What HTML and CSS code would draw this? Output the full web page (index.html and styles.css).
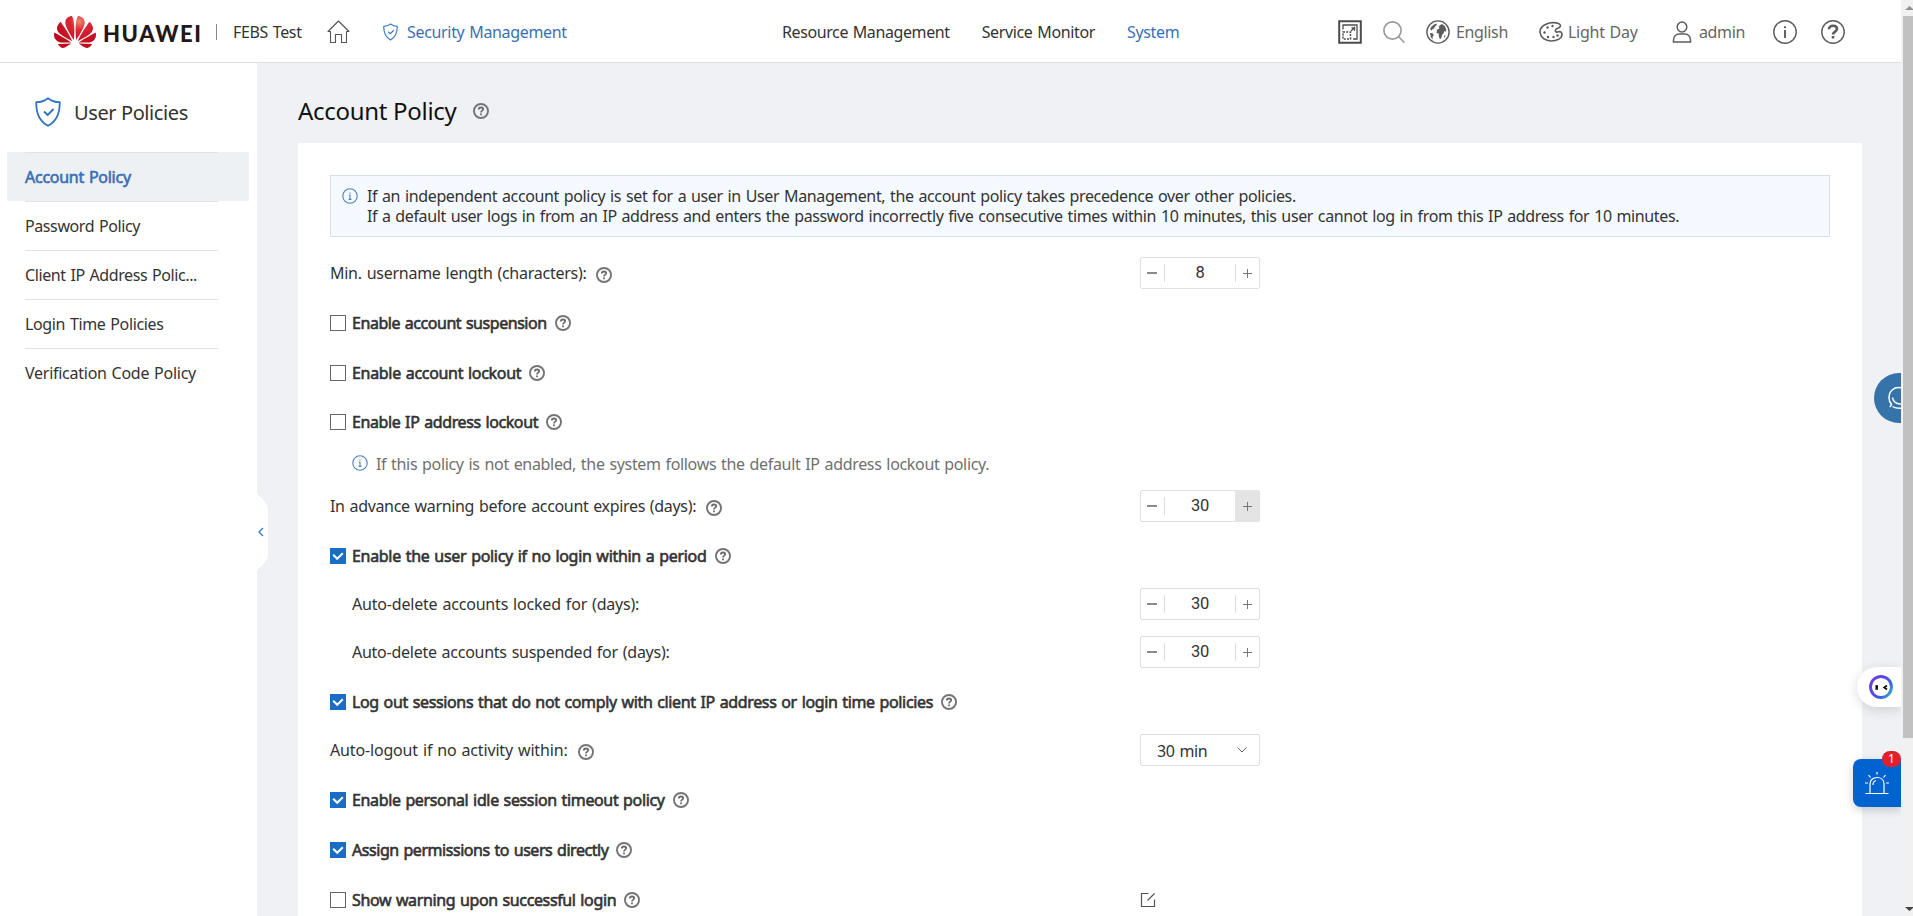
FILE: index.html
```html
<!DOCTYPE html>
<html lang="en">
<head>
<meta charset="utf-8">
<title>Account Policy</title>
<link rel="stylesheet" href="styles.css">
</head>
<body>
<svg class="defs" aria-hidden="true">
  <symbol id="help" viewBox="0 0 16 16"><circle cx="8" cy="8" r="7.050" fill="none" stroke="#757575" stroke-width="1.900"/><path d="M5.800 6.600C5.800 5.200 6.700 4.500 8 4.500s2.200.7 2.200 1.800C10.200 7.600 8 7.700 8 9.500M8 10.500v1.700" fill="none" stroke="#6c6c6c" stroke-width="1.800"/></symbol>
  <symbol id="info" viewBox="0 0 16 16"><circle cx="8" cy="8" r="7.200" fill="none" stroke="#4b82bd" stroke-width="1.100"/><path d="M8 4.400v1.300M6.800 7.200H8v4M6.600 11.400h2.900" fill="none" stroke="#4b82bd" stroke-width="1.100"/></symbol>
  <symbol id="shield" viewBox="0 0 26 30"><path d="M13 1.200C9.500 4 5.500 5.200 1.300 5.200 1 16 4 24 13 28.800 22 24 25 16 24.700 5.200 20.500 5.200 16.500 4 13 1.200ZM9 14.500l3.600 3.500 6-6" fill="none" stroke="currentColor" stroke-width="var(--sw)" stroke-linejoin="round"/></symbol>
  <symbol id="tick" viewBox="0 0 16 16"><path d="M3.200 6.800l4 4 5.600-5.600" fill="none" stroke="#fff" stroke-width="2"/></symbol>
</svg>
<div class="app">
  <div class="page">
    <header class="top">
      <div class="brand">
        <svg class="petals" viewBox="0 2.900 24 18.200" preserveAspectRatio="none"><defs><radialGradient id="red" gradientUnits="userSpaceOnUse" cx="14.500" cy="6" r="14"><stop offset="0" stop-color="#f08a70"/><stop offset=".35" stop-color="#dd2735"/><stop offset="1" stop-color="#bd0a1c"/></radialGradient></defs><path fill="url(#red)" d="M3.67 6.14S1.82 7.91 1.72 9.78v.35c.08 1.51 1.22 2.4 1.22 2.4 1.83 1.79 6.26 4.04 7.3 4.55 0 0 .06.03.1-.01l.02-.04v-.04C7.52 10.8 3.67 6.14 3.67 6.14zM9.65 18.6c-.02-.08-.1-.08-.1-.08l-7.38.26c.8 1.43 2.15 2.53 3.56 2.2.96-.25 3.16-1.78 3.88-2.3.06-.05.04-.09.04-.09zm.08-.78C6.49 15.63.21 12.28.21 12.28c-.15.46-.2.9-.21 1.3v.07c0 1.07.4 1.82.4 1.82.8 1.69 2.34 2.2 2.34 2.2.7.3 1.4.31 1.4.31.12.02 4.4 0 5.54 0 .05 0 .08-.05.08-.05v-.06c0-.03-.03-.05-.03-.05zM9.06 3.19a3.42 3.42 0 00-2.57 3.15v.41c.03.6.16 1.05.16 1.05.66 2.9 3.86 7.65 4.55 8.65.05.05.1.03.1.03a.1.1 0 00.06-.1c1.06-10.6-1.110-13.420-1.110-13.420-.32.02-1.190.23-1.190.23zm8.299 2.27s-.49-1.800-2.440-2.280c0 0-.57-.14-1.170-.22 0 0-2.180 2.810-1.120 13.430.01.07.06.08.06.08.07.03.1-.03.1-.03.72-1.030 3.900-5.760 4.550-8.640 0 0 .36-1.400.02-2.340zm-2.920 13.070s-.07 0-.09.05c0 0-.01.07.03.1.7.51 2.850 2 3.880 2.300 0 0 .16.05.43.06h.14c.69-.02 1.900-.37 3-2.260l-7.400-.25zm7.830-8.410c.14-2.060-1.940-3.970-1.940-3.980 0 0-3.850 4.660-6.670 10.800 0 0-.03.08.02.13l.04.01h.06c1.060-.53 5.460-2.770 7.280-4.540 0 0 1.150-.93 1.210-2.420zm1.520 2.140s-6.280 3.370-9.520 5.550c0 0-.05.04-.03.11 0 0 .03.06.07.06 1.160 0 5.560 0 5.670-.02 0 0 .57-.02 1.270-.29 0 0 1.560-.5 2.370-2.270 0 0 .73-1.450.17-3.140z"/></svg>
        <span class="wordmark">HUAWEI</span>
        <i class="bar"></i>
        <span class="t product">FEBS Test</span>
        <svg class="home" viewBox="0 0 23 24" fill="none" stroke="#555" stroke-width="1.100" stroke-linejoin="round"><path d="M3.500 11.500H1L11.500 1 22 11.500h-2.500V22.500h-5v-8h-6v8h-5z"/></svg>
        <svg class="mini-shield"><use href="#shield"/></svg>
        <span class="t k33 active">Security Management</span>
      </div>
      <nav class="nav">
        <span class="t k40">Resource Management</span><span class="t">Service Monitor</span><span class="t active">System</span>
      </nav>
      <div class="tools">
        <svg class="ic" viewBox="0 0 24 24" fill="none" stroke="#4c4c4c"><path d="M1.200 1.200h21.600v21.600H1.200z" stroke-width="2"/><path d="M5 9.500V5h14v14h-4M13 11l4-4M13.500 7.800h3v3" stroke-width="1.300"/><path d="M5 12h7.500v7H5z" stroke-width="1.500" stroke-dasharray="2 1.200"/></svg>
        <svg class="ic" viewBox="0 0 24 24" fill="none" stroke="#999" stroke-width="1.600"><circle cx="10.500" cy="10.500" r="8.600"/><path d="M16.800 16.800l5.700 6"/></svg>
        <svg class="ic" viewBox="0 0 24 24"><circle cx="12" cy="12" r="11.100" fill="none" stroke="#5c5c5c" stroke-width="1.400"/><path fill="#5c5c5c" d="M8 4.500l3-1-.5 1.800-1.500 1.200-1 2-1.500.7-1 1.300-1.300-1.200.8-2zM4 13l2.500.3 1.300 1.700-1.200 2v2.500l-1.800-2.500zM13.500 5.500l2.500-1.500 2.800 2 1.500 3.500-.8 2.500-1.300-1-.7 2.500-1.500 1.500-.5 2.500-1.500 2-1.300-3.500.3-2.200-2.500-.8.5-3.200 2.500-1.500-.7-1.200zM18.300 15.500l1.300-.5-.8 2.200-.8.300z"/></svg>
        <span class="t">English</span>
        <svg class="ic" viewBox="0 0 24 24" fill="none" stroke="#5c5c5c" stroke-width="1.600"><path d="M20.500 4C17 2.300 11 2 7 4.200 2 6.500.5 10 1.200 13.200 2 17.500 6 21 12 21c6.500 0 11-3 11-6.500 0-2-1.500-3.500-3.500-2.700-1.800.8-3.200.2-3.200-1.300 0-2 2.200-2 3.700-2.800 1.500-.8 2-2.500.5-3.700z"/><g fill="#5c5c5c" stroke="none"><circle cx="5.500" cy="12.500" r="1.200"/><circle cx="8.500" cy="7.500" r="1.200"/><circle cx="13.500" cy="6" r="1.200"/><circle cx="9" cy="17" r="1.200"/><circle cx="14.500" cy="17" r="1.200"/><circle cx="18.500" cy="15.500" r="1.200"/></g></svg>
        <span class="t k27">Light Day</span>
        <svg class="ic" viewBox="0 0 24 24" fill="none" stroke="#5c5c5c" stroke-width="1.500"><ellipse cx="12" cy="7" rx="4.800" ry="5"/><path d="M3.500 22v-2c0-4 3-6 5.500-6h6c2.500 0 5.500 2 5.500 6v2z"/></svg>
        <span class="t">admin</span>
        <svg class="ic" viewBox="0 0 24 24" fill="none" stroke="#5c5c5c" stroke-width="1.400"><circle cx="12" cy="12" r="11.200"/><path d="M12 10v8M12 6.200v2" stroke-width="1.900"/></svg>
        <svg class="ic" viewBox="0 0 24 24" fill="none" stroke="#5c5c5c" stroke-width="1.400"><circle cx="12" cy="12" r="11.200"/><path d="M8 9.300c0-2.300 1.600-3.600 4-3.600s4 1.300 4 3.300c0 2.500-4 2.800-4 5.600M12 16v2.600" stroke-width="2.600"/></svg>
      </div>
    </header>
    <div class="body">
      <aside class="side">
        <div class="side-title"><svg class="big-shield"><use href="#shield"/></svg><span>User Policies</span></div>
        <ul class="menu">
          <li class="on"><span class="t k27">Account Policy</span></li>
          <li><span class="t k40">Password Policy</span></li>
          <li><span class="t k40">Client IP Address Polic...</span></li>
          <li><span class="t">Login Time Policies</span></li>
          <li><span class="t k27">Verification Code Policy</span></li>
        </ul>
        <svg class="fold" viewBox="0 0 12 80"><path d="M0 0c0 5 11 8 11 18v44c0 10-11 13-11 18z" fill="#fff"/><path d="M6 36l-4 4 4 4" fill="none" stroke="#3a7fc0" stroke-width="1.400"/></svg>
      </aside>
      <main class="main">
        <h1 class="title"><span>Account Policy</span><svg class="q"><use href="#help"/></svg></h1>
        <section class="card">
          <div class="note">
            <svg class="q"><use href="#info"/></svg>
            <div><p class="t">If an independent account policy is set for a user in User Management, the account policy takes precedence over other policies.</p><p class="t k38">If a default user logs in from an IP address and enters the password incorrectly five consecutive times within 10 minutes, this user cannot log in from this IP address for 10 minutes.</p></div>
          </div>
          <div class="row first"><div class="label"><span class="t k27">Min. username length (characters):</span><svg class="q low"><use href="#help"/></svg></div><div class="spin"><b class="minus"></b><span>8</span><b class="plus"></b></div></div>
          <div class="row"><div class="check"><i class="box"></i><span class="t s k46">Enable account suspension</span><svg class="q"><use href="#help"/></svg></div></div>
          <div class="row"><div class="check"><i class="box"></i><span class="t s k31">Enable account lockout</span><svg class="q"><use href="#help"/></svg></div></div>
          <div class="row r48"><div class="check"><i class="box"></i><span class="t s k40">Enable IP address lockout</span><svg class="q"><use href="#help"/></svg></div></div>
          <div class="row r34 hint"><svg class="q"><use href="#info"/></svg><span class="t k33">If this policy is not enabled, the system follows the default IP address lockout policy.</span></div>
          <div class="row r52"><div class="label"><span class="t k33">In advance warning before account expires (days):</span><svg class="q low"><use href="#help"/></svg></div><div class="spin hot"><b class="minus"></b><span>30</span><b class="plus"></b></div></div>
          <div class="row r48"><div class="check"><svg class="box on"><use href="#tick"/></svg><span class="t s k31">Enable the user policy if no login within a period</span><svg class="q"><use href="#help"/></svg></div></div>
          <div class="row r48"><div class="label sub"><span class="t k20">Auto-delete accounts locked for (days):</span></div><div class="spin"><b class="minus"></b><span>30</span><b class="plus"></b></div></div>
          <div class="row r48"><div class="label sub"><span class="t k27">Auto-delete accounts suspended for (days):</span></div><div class="spin"><b class="minus"></b><span>30</span><b class="plus"></b></div></div>
          <div class="row r52"><div class="check"><svg class="box on"><use href="#tick"/></svg><span class="t s">Log out sessions that do not comply with client IP address or login time policies</span><svg class="q"><use href="#help"/></svg></div></div>
          <div class="row timeout"><div class="label"><span class="t k17">Auto-logout if no activity within:</span><svg class="q low"><use href="#help"/></svg></div><div class="select"><span class="t">30 min</span><svg viewBox="0 0 10 6"><path d="M.5.5L5 5 9.500.5" fill="none" stroke="#666"/></svg></div></div>
          <div class="row"><div class="check"><svg class="box on"><use href="#tick"/></svg><span class="t s">Enable personal idle session timeout policy</span><svg class="q"><use href="#help"/></svg></div></div>
          <div class="row"><div class="check"><svg class="box on"><use href="#tick"/></svg><span class="t s k46">Assign permissions to users directly</span><svg class="q"><use href="#help"/></svg></div></div>
          <div class="row"><div class="check wide"><i class="box"></i><span class="t s k38">Show warning upon successful login</span><svg class="q"><use href="#help"/></svg></div><svg class="edit" viewBox="0 0 16 16"><path d="M8.500 1.500h-7v13h13v-7M7.500 8.500l7-7" fill="none" stroke="#555" stroke-width="1.200"/></svg></div>
        </section>
      </main>
    </div>
    <div class="chat"><svg viewBox="0 0 27 50" fill="none" stroke="#fff" stroke-width="1.500"><path d="M27 14.700c-7-1.500-12 3.500-12 10 0 3 1 5 2.500 6.500l-1.500 3M18.500 33.500c3 2 5.500 2 8.500 1.800M18.500 24.500c.5 4 4 7 8.500 6.500"/></svg></div>
    <div class="bot"><svg viewBox="0 0 24 24"><defs><linearGradient id="ring" x1="0" y1=".2" x2="1" y2=".9"><stop offset="0" stop-color="#6a3fe0"/><stop offset=".35" stop-color="#5a4be0"/><stop offset=".7" stop-color="#3b62dc"/><stop offset="1" stop-color="#35b5c8"/></linearGradient></defs><circle cx="12" cy="12" r="10.500" fill="#fff" stroke="url(#ring)" stroke-width="2.900"/><path d="M7.700 10.200v4.600" fill="none" stroke="#111" stroke-width="2.600"/><path d="M18 10.500l-2.800 2 2.800 2" fill="none" stroke="#111" stroke-width="1.800"/></svg></div>
    <div class="alarm"><svg viewBox="0 0 24 24" fill="none" stroke="#fff" stroke-width="1.200"><path d="M.5 22.500h23M5 22.500V13c0-4 3-6.500 7-6.500s7 2.500 7 6.500v9.500M8 14c0-2.500 1-4 3-4.500M12 1v2.500M3.500 4l2 2.500M20.500 4l-2 2.500M0 12h3M21 12h3"/></svg><span class="badge">1</span></div>
  </div>
  <div class="scroll"><svg viewBox="0 0 12 16"><path d="M4 10l4.500-4L13 10z" fill="#909090"/></svg><i class="thumb"></i><svg viewBox="0 0 12 16"><path d="M4 7l4.500 4L13 7z" fill="#444"/></svg></div>
</div>
</body>
</html>
```
FILE: styles.css
```css
* { box-sizing: border-box; }
body { margin: 0; overflow: hidden; font-family: "Noto Sans", sans-serif; font-size: 16px; line-height: 20px; color: #333; background: #fff; }
svg { display: block; flex: none; }
p, h1, ul { margin: 0; padding: 0; font-weight: normal; list-style: none; }
.defs { position: absolute; width: 0; height: 0; }
.app { display: flex; width: 1913px; height: 916px; overflow: hidden; }
.page { position: relative; width: 1901px; height: 916px; overflow: hidden; background: #eff1f5; }

/* Text with tracking steps */
.t { letter-spacing: -.36px; word-spacing: 1px; white-space: nowrap; }
.k17 { letter-spacing: -.16px; }
.k20 { letter-spacing: -.19px; }
.k27 { letter-spacing: -.26px; }
.k31 { letter-spacing: -.31px; }
.k33 { letter-spacing: -.33px; }
.k38 { letter-spacing: -.375px; }
.k40 { letter-spacing: -.4px; }
.k46 { letter-spacing: -.45px; }
.active { color: #3a6fb5; }

.top { display: grid; grid-template-columns: 782px 556px 1fr; align-items: center; height: 63px; padding-top: 2px; background: #fff; border-bottom: 1px solid #dcdee2; }
.brand { display: grid; grid-template-columns: 49px 113px 17px 94px 56px 24px auto; align-items: center; padding-left: 54px; justify-content: start; }
.petals { width: 42px; height: 32px; }
.wordmark { padding-top: 3px; font: 900 22px/24px Lato, sans-serif; letter-spacing: 1.6px; color: #231815; }
.bar { width: 1px; height: 16px; background: #8a8a8a; }
.home { width: 23px; height: 24px; }
.mini-shield { width: 15px; height: 18px; color: #3a7abf; --sw: 2px; }
.nav { display: flex; gap: 32px; }
.tools { display: grid; grid-template-columns: 44px 44px 30px 83px 29px 102px 29px 74px 48px 24px; align-items: center; color: #666; }
.ic { width: 24px; height: 24px; }

.body { display: flex; height: 853px; }
.side { position: relative; width: 257px; background: #fff; padding-top: 34px; }
.side-title { display: flex; align-items: center; gap: 13px; height: 30px; padding-left: 35px; font-size: 20px; letter-spacing: -.4px; }
.side-title span { padding-top: 2px; }
.big-shield { width: 26px; height: 30px; color: #2f74bd; --sw: 1.8px; }
.menu { margin-top: 25px; }
.menu li { display: flex; align-items: center; height: 49px; margin: 0 8px 0 7px; padding: 1px 0 0 18px; background: linear-gradient(#dfe2e7, #dfe2e7) 18px 0 / 193px 1px no-repeat; }
.menu .on { background-color: #eef1f4; color: #3a6fb5; -webkit-text-stroke: .6px; }
.fold { position: absolute; left: 257px; top: 429px; width: 12px; height: 80px; }

.main { width: 1605px; padding-left: 41px; }
.title { display: flex; align-items: center; gap: 17px; height: 80px; padding-top: 16px; font-size: 24px; line-height: 32px; color: #111; letter-spacing: -.3px; }
.card { width: 1564px; height: 790px; padding: 32px 32px 0; background: #fff; }
.note { display: flex; gap: 9px; height: 62px; padding: 10px 0 0 11px; border: 1px solid #d8e0e7; background: #f4faff; }
.note .q { margin-top: 2px; }
.q { width: 16px; height: 16px; }
.row { display: flex; align-items: center; height: 50px; }
.r34 { height: 34px; }
.r48 { height: 48px; }
.r52 { height: 52px; }
.first { height: 50px; margin-top: 11px; }
.timeout { height: 44px; margin-bottom: 3px; }
.label { display: flex; align-items: center; gap: 10px; width: 811px; }
.wide { width: 810px; }
.low { margin-top: 4px; }
.sub { padding-left: 22px; }
.check { display: flex; align-items: center; gap: 8px; }
.s { -webkit-text-stroke: .6px; margin-left: -2px; }
.box { width: 16px; height: 16px; border: 1px solid #666; background: #fff; }
.box.on { border: 0; background: #1a6dc2; }
.hint { gap: 8px; padding-left: 22px; color: #707070; }
.hint .t { padding-top: 2px; }
.spin, .select { display: flex; align-items: center; width: 120px; height: 32px; margin-left: -1px; border: 1px solid #dfdfdf; border-radius: 2px; background: #fff; }
.spin span { flex: 1; text-align: center; font: 400 16.5px/20px Roboto, sans-serif; letter-spacing: -.3px; color: #333; }
.minus, .plus { width: 24px; height: 18px; border: 0 solid #ddd; background: linear-gradient(#8a8a8a, #8a8a8a) 6px 8px / 10px 2px no-repeat; }
.minus { border-right-width: 1px; }
.plus { border-left-width: 1px; background: linear-gradient(#777, #777) 7px 9px / 9px 1px no-repeat, linear-gradient(#777, #777) 11px 5px / 1px 9px no-repeat; }
.hot .plus { height: 32px; border: 0; background: linear-gradient(#777, #777) 8px 16px / 9px 1px no-repeat, linear-gradient(#777, #777) 12px 12px / 1px 9px no-repeat, #e4e4e4; }
.select { justify-content: space-between; padding: 2px 12px 0 16px; }
.select svg { width: 10px; height: 6px; margin-bottom: 3px; }
.edit { width: 16px; height: 16px; }

/* Widgets floating over the right edge */
.chat { position: absolute; left: 1874px; top: 373px; width: 27px; height: 50px; border-radius: 25px 0 0 25px; background: #3573a9; }
.bot { position: absolute; left: 1857px; top: 667px; width: 44px; height: 40px; padding: 8px 0 0 12px; border-radius: 20px 0 0 20px; background: #fff; box-shadow: 0 3px 12px rgba(0,0,0,.14); }
.bot svg, .alarm svg { width: 24px; height: 24px; }
.alarm { position: absolute; left: 1853px; top: 759px; width: 48px; height: 48px; padding: 12px; border-radius: 8px 0 0 8px; background: #0063d0; box-shadow: 0 3px 10px rgba(0,0,0,.18); }
.badge { position: absolute; right: 0; top: -8px; width: 19px; height: 16px; border-radius: 8px; background: #e0202c; color: #fff; font-size: 12px; line-height: 16px; text-align: center; }
.scroll { display: flex; flex-direction: column; width: 12px; background: #f1f1f1; }
.scroll svg { width: 12px; height: 16px; }
.thumb { width: 10px; height: 722px; margin: 0 0 162px 2px; background: #c1c1c1; }
```
